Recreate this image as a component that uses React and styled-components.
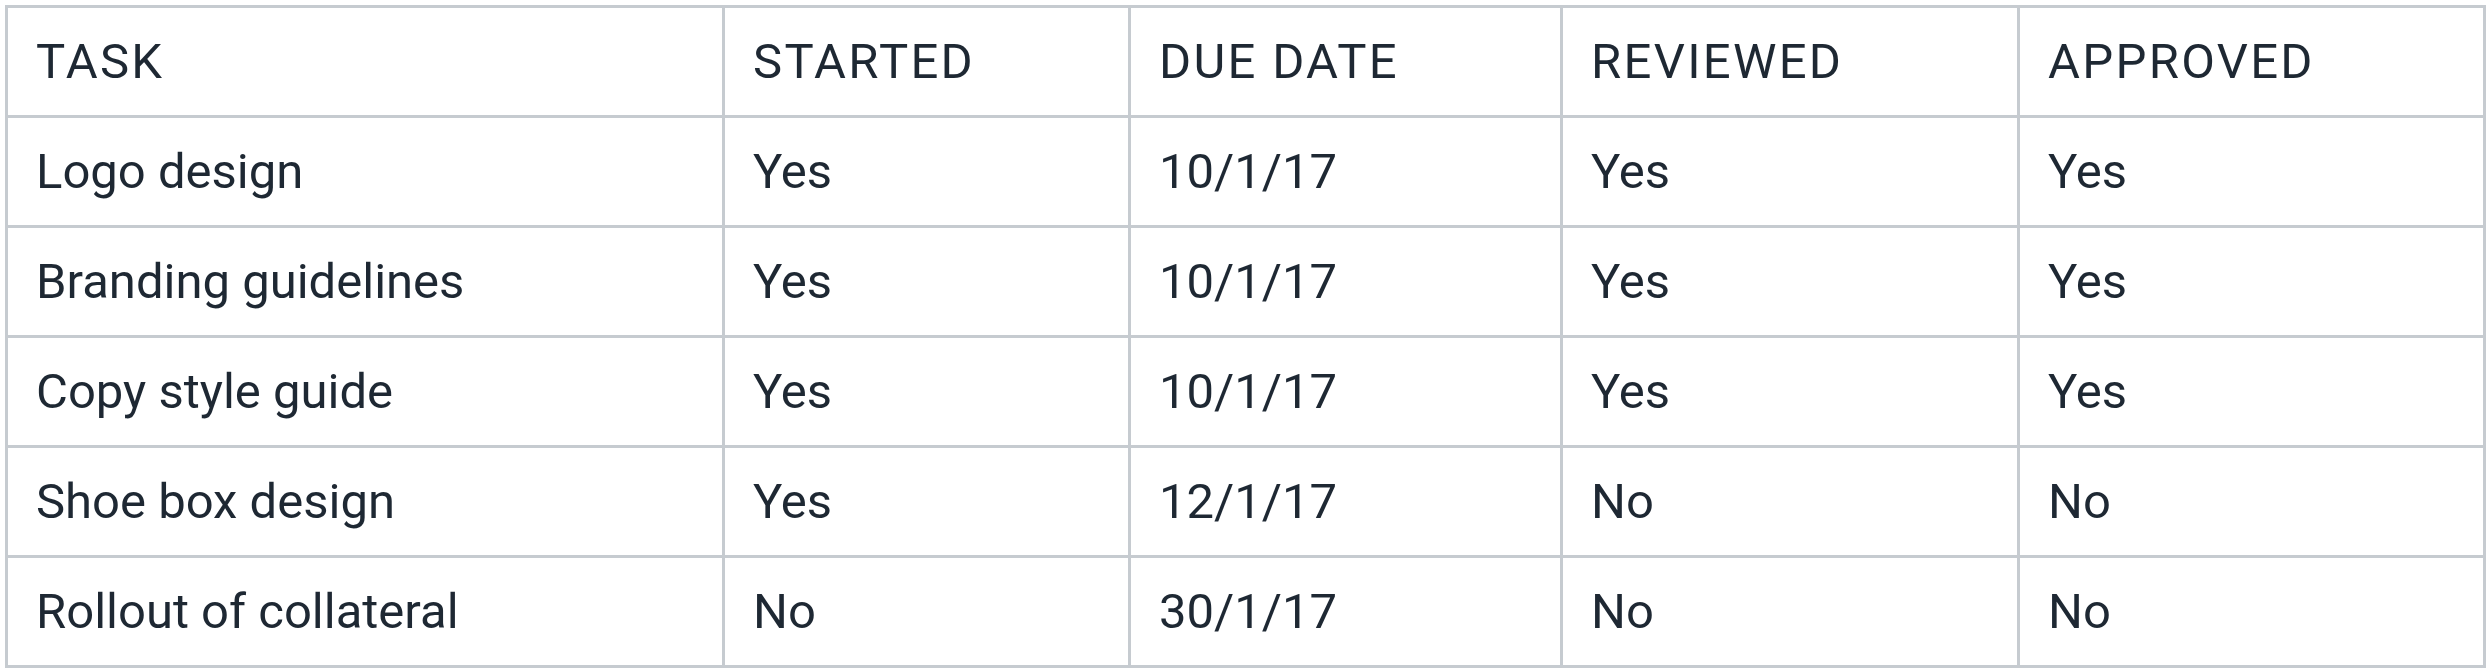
import React from 'react';
import styled, { createGlobalStyle } from 'styled-components';

const GlobalStyle = createGlobalStyle`
  html, body {
    margin: 0;
    padding: 0;
    background: #ffffff;
  }
  body {
    font-family: Roboto, "Liberation Sans", sans-serif;
  }
`;

const Page = styled.div`
  padding: 5px;
`;

const Table = styled.table`
  width: 100%;
  border-collapse: collapse;
  table-layout: fixed;
  border: 3px solid #c6cbd0;
  color: #1e2833;
  font-size: 49px;
  font-weight: 400;
`;

const HeadCell = styled.th`
  text-align: left;
  font-weight: 400;
  text-transform: uppercase;
  letter-spacing: 2.3px;
  height: 107px;
  padding: 0 28px;
  border: 3px solid #c6cbd0;
  white-space: nowrap;
`;

const Cell = styled.td`
  height: 107px;
  padding: 0 28px;
  border: 3px solid #c6cbd0;
  white-space: nowrap;
`;

const columns = [
  { label: 'Task', width: 717 },
  { label: 'Started', width: 406 },
  { label: 'Due date', width: 432 },
  { label: 'Reviewed', width: 457 },
  { label: 'Approved', width: 466 },
];

const rows = [
  ['Logo design', 'Yes', '10/1/17', 'Yes', 'Yes'],
  ['Branding guidelines', 'Yes', '10/1/17', 'Yes', 'Yes'],
  ['Copy style guide', 'Yes', '10/1/17', 'Yes', 'Yes'],
  ['Shoe box design', 'Yes', '12/1/17', 'No', 'No'],
  ['Rollout of collateral', 'No', '30/1/17', 'No', 'No'],
];

const App = () => {
  return (
    <>
      <GlobalStyle />
      <Page>
        <Table>
          <colgroup>
            {columns.map((c) => (
              <col key={c.label} style={{ width: c.width }} />
            ))}
          </colgroup>
          <thead>
            <tr>
              {columns.map((c) => (
                <HeadCell key={c.label}>{c.label}</HeadCell>
              ))}
            </tr>
          </thead>
          <tbody>
            {rows.map((row) => (
              <tr key={row[0]}>
                {row.map((value, i) => (
                  <Cell key={i}>{value}</Cell>
                ))}
              </tr>
            ))}
          </tbody>
        </Table>
      </Page>
    </>
  );
};

export default App;
